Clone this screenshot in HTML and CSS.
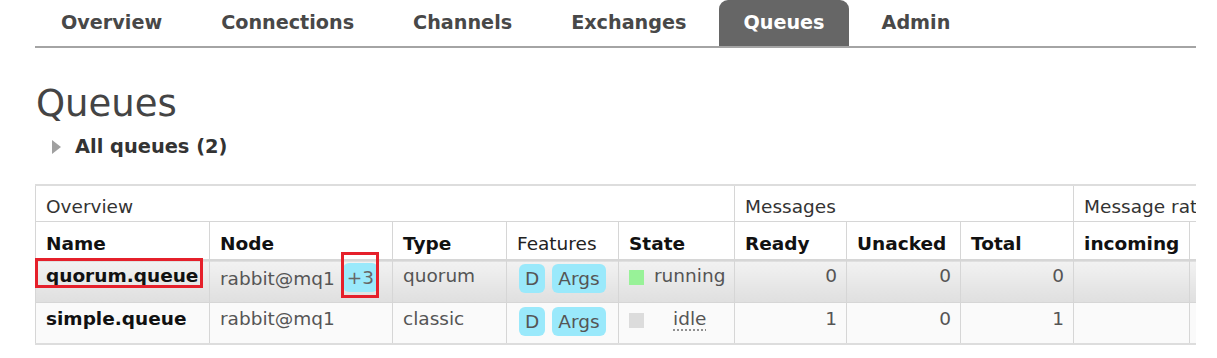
FILE: index.html
```html
<!DOCTYPE html>
<html lang="en">

<head>
    <meta charset="UTF-8">
    <title>Queues</title>
    <link rel="stylesheet" href="styles.css">
</head>

<body>
    <div class="page">
        <ul class="tabs">
            <li>Overview</li>
            <li>Connections</li>
            <li>Channels</li>
            <li>Exchanges</li>
            <li class="active">Queues</li>
            <li>Admin</li>
        </ul>

        <h1>Queues</h1>
        <h2 class="section-toggle"><span class="arrow"></span>All queues (2)</h2>

        <div class="table-wrap">
            <table class="list">
                <colgroup>
                    <col style="width: 174px">
                    <col style="width: 183px">
                    <col style="width: 114px">
                    <col style="width: 112px">
                    <col style="width: 116px">
                    <col style="width: 112px">
                    <col style="width: 114px">
                    <col style="width: 113px">
                    <col style="width: 116px">
                    <col style="width: 116px">
                </colgroup>
                <thead>
                    <tr class="group-row">
                        <th colspan="5">Overview</th>
                        <th colspan="3">Messages</th>
                        <th colspan="2">Message rat</th>
                    </tr>
                    <tr class="head-row">
                        <th>Name</th>
                        <th>Node</th>
                        <th>Type</th>
                        <th class="plain">Features</th>
                        <th>State</th>
                        <th>Ready</th>
                        <th>Unacked</th>
                        <th>Total</th>
                        <th>incoming</th>
                        <th></th>
                    </tr>
                </thead>
                <tbody>
                    <tr class="alt1">
                        <td class="name"><span class="mark mark-name"></span>quorum.queue</td>
                        <td>rabbit@mq1 <span class="badge badge-node">+3<span class="mark mark-node"></span></span></td>
                        <td>quorum</td>
                        <td><span class="badge">D</span><span class="badge">Args</span></td>
                        <td><span class="state running"></span>running</td>
                        <td class="num">0</td>
                        <td class="num">0</td>
                        <td class="num">0</td>
                        <td></td>
                        <td></td>
                    </tr>
                    <tr class="alt2">
                        <td class="name">simple.queue</td>
                        <td>rabbit@mq1</td>
                        <td>classic</td>
                        <td><span class="badge">D</span><span class="badge">Args</span></td>
                        <td><span class="state idle"></span><abbr class="idle-text">idle</abbr></td>
                        <td class="num">1</td>
                        <td class="num">0</td>
                        <td class="num">1</td>
                        <td></td>
                        <td></td>
                    </tr>
                </tbody>
            </table>
        </div>
    </div>
</body>

</html>
```

FILE: styles.css
```css
body {
    margin: 0;
    background: #fff;
    font-family: "DejaVu Sans", Verdana, sans-serif;
    font-size: 18.5px;
    color: #444;
}

.page {
    width: 1161px;
    margin-left: 35px;
    overflow: hidden;
}

/* tab bar */
.tabs {
    list-style: none;
    margin: 0;
    padding: 0;
    display: flex;
    gap: 7px;
    height: 46px;
    border-bottom: 2px solid #a4a4a4;
}

.tabs li {
    padding: 0 26px;
    line-height: 46px;
    font-size: 19.2px;
    font-weight: bold;
    color: #484848;
}

.tabs li.active {
    padding: 0 24px;
    background: #666;
    color: #fff;
    border-radius: 9px 9px 0 0;
}

h1 {
    margin: 34px 0 0 1px;
    font-size: 37px;
    font-weight: normal;
    line-height: 44px;
    color: #444;
}

.section-toggle {
    display: flex;
    align-items: center;
    margin: 9px 0 0;
    padding-left: 17px;
    font-size: 19.4px;
    line-height: 24px;
    color: #333;
}

.arrow {
    width: 0;
    height: 0;
    border-left: 9px solid #a0a0a0;
    border-top: 7.5px solid transparent;
    border-bottom: 7.5px solid transparent;
    margin-right: 14px;
}

/* queue table */
.table-wrap {
    margin-top: 25px;
}

.list {
    border-collapse: collapse;
    table-layout: fixed;
    width: 1270px;
    border-top: 2px solid #ddd;
    border-bottom: 2px solid #ddd;
}

.list th,
.list td {
    border: 1px solid #d6d6d6;
    padding: 6px 10px 0;
    text-align: left;
    white-space: nowrap;
    overflow: hidden;
}

.group-row th {
    height: 29px;
    font-weight: normal;
    color: #333;
    background: #fff;
}

.head-row th {
    height: 31px;
    font-weight: bold;
    color: #111;
    background: #fff;
    border-bottom: 2px solid #d6d6d6;
}

.head-row th.plain {
    font-weight: normal;
    color: #222;
}

.list td {
    vertical-align: top;
    line-height: 24px;
    color: #555;
    position: relative;
    overflow: visible;
}

.alt1 td {
    height: 38px;
    padding-top: 3px;
    background: linear-gradient(#f2f2f2, #dfdfdf);
}

.alt2 td {
    height: 36px;
    padding-top: 4px;
    background: #fafafa;
}

.list td.name {
    font-weight: bold;
    color: #111;
}

.list td.num {
    text-align: right;
    padding-right: 9px;
}

.badge {
    display: inline-block;
    position: relative;
    top: 0;
    padding: 0 6px;
    margin-right: 7px;
    line-height: 29px;
    background: #9ae9fb;
    border-radius: 6px;
    color: #555;
}

.list td .badge:first-child {
    margin-left: 2px;
}

.list td .badge-node {
    top: -1px;
    margin-left: 5px;
    padding: 0 4px;
    color: #666;
}

.state {
    display: inline-block;
    width: 15px;
    height: 15px;
    margin-right: 10px;
    vertical-align: -3px;
}

.state.running {
    background: #98f298;
}

.state.idle {
    background: #dcdcdc;
}

.idle-text {
    margin-left: 19px;
    text-decoration: underline dotted #888;
    text-underline-offset: 5px;
}

/* red annotation boxes drawn over the screenshot */
.mark {
    position: absolute;
    border: 3px solid #e5202b;
    pointer-events: none;
}

.mark-name {
    left: -1px;
    top: -3px;
    width: 162px;
    height: 24px;
}

.mark-node {
    left: -2px;
    top: -11px;
    width: 32px;
    height: 40px;
}
```
